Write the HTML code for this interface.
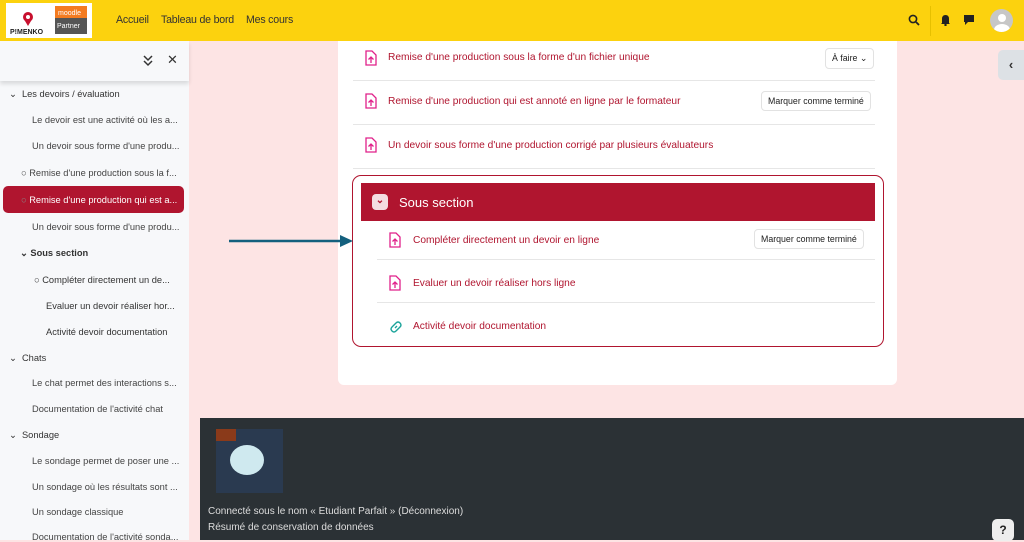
<!DOCTYPE html>
<html><head><meta charset="utf-8"><style>
*{box-sizing:border-box;margin:0;padding:0}
body{width:1024px;height:540px;overflow:hidden;font-family:"Liberation Sans",sans-serif;background:#fde4e4;position:relative;font-size:11px;color:#333}
.hdr{position:absolute;left:0;top:0;width:1024px;height:41px;background:#fcd20e}
.logo{position:absolute;left:6px;top:3px;width:86px;height:35px;background:#fff}
.nav{position:absolute;top:14px;font-size:10.6px;color:#333;letter-spacing:-0.2px;white-space:nowrap}
.side{position:absolute;left:0;top:41px;width:189px;height:499px;background:#f7f8fa}
.sidetop{height:40px;background:#f7f8fa;box-shadow:0 3px 4px rgba(0,0,0,.12);position:relative}
.si{position:absolute;font-size:9.3px;color:#333;white-space:nowrap}
.card{position:absolute;left:338px;top:41px;width:559px;height:344px;background:#fff;border-radius:0 0 6px 6px}
.row{position:absolute;left:353px;width:522px;height:44px;border-bottom:1px solid #e6e6e6}
.act{position:absolute;color:#b0152f;font-size:10.2px;white-space:nowrap}
.btn{position:absolute;border:1px solid #e2e2e2;border-radius:4px;font-size:8.8px;color:#222;padding:4px 6px;background:#fff;white-space:nowrap}
.foot{position:absolute;left:200px;top:418px;width:824px;height:122px;background:#2b3135}
</style></head><body>
<div class="hdr">
 <div class="logo">
  <svg width="86" height="35"><circle cx="22" cy="14" r="5" fill="#c8102e"/><circle cx="22" cy="14" r="2" fill="#fff"/><path d="M19 18 L22 23 L25 18" fill="#c8102e"/>
  <text x="4" y="31" font-size="7" font-weight="bold" font-family="Liberation Sans" fill="#222">P!MENKO</text>
  <rect x="49" y="3" width="32" height="28" fill="#555"/><rect x="49" y="3" width="32" height="12" fill="#f47b20"/>
  <text x="52" y="12" font-size="7" fill="#fff" font-family="Liberation Sans">moodle</text>
  <text x="51" y="25" font-size="7" fill="#fff" font-family="Liberation Sans">Partner</text></svg>
 </div>
 <div class="nav" style="left:116px">Accueil</div>
 <div class="nav" style="left:161px">Tableau de bord</div>
 <div class="nav" style="left:246px">Mes cours</div>
 <svg style="position:absolute;left:908px;top:14px" width="12" height="12"><circle cx="5" cy="5" r="3.6" stroke="#222" stroke-width="1.6" fill="none"/><path d="M8 8 L11 11" stroke="#222" stroke-width="1.8"/></svg>
 <div style="position:absolute;left:930px;top:6px;width:1px;height:30px;background:#e6c000"></div>
 <svg style="position:absolute;left:940px;top:14px" width="11" height="12"><path d="M2 9 L2 5 Q2 1 5.5 1 Q9 1 9 5 L9 9 L10 10 L1 10 Z" fill="#222"/><circle cx="5.5" cy="11" r="1.2" fill="#222"/></svg>
 <svg style="position:absolute;left:963px;top:14px" width="12" height="12"><path d="M1 1 H11 V8 H5 L2 11 V8 H1 Z" fill="#222"/></svg>
 <div style="position:absolute;left:990px;top:9px;width:23px;height:23px;border-radius:50%;background:#c7c7c7;overflow:hidden"><div style="position:absolute;left:8px;top:5px;width:8px;height:8px;border-radius:50%;background:#fff"></div><div style="position:absolute;left:4px;top:15px;width:16px;height:12px;border-radius:50%;background:#fff"></div></div>
</div>
<div class="side">
 <div class="sidetop"><svg style="position:absolute;left:143px;top:14px" width="10" height="12"><path d="M1 1 L5 5 L9 1 M1 6 L5 10 L9 6" stroke="#333" stroke-width="1.5" fill="none"/></svg><span style="position:absolute;left:167px;top:11px;font-size:13px">✕</span></div>
 <div style="position:absolute;left:3px;top:145px;width:181px;height:27px;background:#b0152f;border-radius:5px"></div>
 <div class="si" style="left:9px;top:48px">⌄ &nbsp;Les devoirs / évaluation</div>
 <div class="si" style="left:32px;top:74px;color:#444">Le devoir est une activité où les a...</div>
 <div class="si" style="left:32px;top:100px;color:#444">Un devoir sous forme d'une produ...</div>
 <div class="si" style="left:21px;top:127px;color:#444">○ Remise d'une production sous la f...</div>
 <div class="si" style="left:21px;top:154px;color:#fff"><span style="color:#888">○</span> Remise d'une production qui est a...</div>
 <div class="si" style="left:32px;top:181px;color:#444">Un devoir sous forme d'une produ...</div>
 <div class="si" style="left:20px;top:207px;font-weight:bold">⌄ Sous section</div>
 <div class="si" style="left:34px;top:234px">○ Compléter directement un de...</div>
 <div class="si" style="left:46px;top:260px">Evaluer un devoir réaliser hor...</div>
 <div class="si" style="left:46px;top:286px">Activité devoir documentation</div>
 <div class="si" style="left:9px;top:312px">⌄ &nbsp;Chats</div>
 <div class="si" style="left:32px;top:337px;color:#444">Le chat permet des interactions s...</div>
 <div class="si" style="left:32px;top:363px;color:#444">Documentation de l'activité chat</div>
 <div class="si" style="left:9px;top:389px">⌄ &nbsp;Sondage</div>
 <div class="si" style="left:32px;top:415px;color:#444">Le sondage permet de poser une ...</div>
 <div class="si" style="left:32px;top:441px;color:#444">Un sondage où les résultats sont ...</div>
 <div class="si" style="left:32px;top:466px;color:#444">Un sondage classique</div>
 <div class="si" style="left:32px;top:491px;color:#444">Documentation de l'activité sonda...</div>
</div>
<div style="position:absolute;left:998px;top:50px;width:26px;height:30px;background:#dde1e5;border-radius:5px 0 0 5px;font-size:13px;text-align:center;line-height:30px;font-weight:bold">‹</div>
<div class="card"></div>
<div class="row" style="top:37px"></div>
<div class="row" style="top:81px"></div>
<div class="row" style="top:125px"></div>
<svg width="0" height="0" style="position:absolute"><defs><g id="up"><path d="M1 1 H7 L11 5 V15 H1 Z" stroke="#e0208a" stroke-width="1.3" fill="none"/><path d="M6 13 V7 M3.5 9.5 L6 7 L8.5 9.5" stroke="#e0208a" stroke-width="1.3" fill="none"/></g></defs></svg>
<svg style="position:absolute;left:365px;top:50px" width="13" height="17"><use href="#up"/></svg>
<div class="act" style="left:388px;top:52px">Remise d'une production sous la forme d'un fichier unique</div>
<div class="btn" style="left:825px;top:48px">À faire ⌄</div>
<svg style="position:absolute;left:365px;top:93px" width="13" height="17"><use href="#up"/></svg>
<div class="act" style="left:388px;top:96px">Remise d'une production qui est annoté en ligne par le formateur</div>
<div class="btn" style="left:761px;top:91px">Marquer comme terminé</div>
<svg style="position:absolute;left:365px;top:137px" width="13" height="17"><use href="#up"/></svg>
<div class="act" style="left:388px;top:140px">Un devoir sous forme d'une production corrigé par plusieurs évaluateurs</div>
<div style="position:absolute;left:352px;top:175px;width:532px;height:172px;border:1.5px solid #b0152f;border-radius:9px"></div>
<div style="position:absolute;left:361px;top:183px;width:514px;height:38px;background:#b0152f"></div>
<div style="position:absolute;left:372px;top:194px;width:16px;height:16px;border-radius:4px;background:#f4dde1;text-align:center;font-size:10px;line-height:14px;color:#b0152f;font-weight:bold">⌄</div>
<div style="position:absolute;left:399px;top:195px;color:#fff;font-size:13px">Sous section</div>
<div class="row" style="left:377px;top:216px;width:498px"></div>
<div class="row" style="left:377px;top:259px;width:498px"></div>
<svg style="position:absolute;left:389px;top:232px" width="13" height="17"><use href="#up"/></svg>
<div class="act" style="left:413px;top:235px">Compléter directement un devoir en ligne</div>
<div class="btn" style="left:754px;top:229px">Marquer comme terminé</div>
<svg style="position:absolute;left:389px;top:275px" width="13" height="17"><use href="#up"/></svg>
<div class="act" style="left:413px;top:278px">Evaluer un devoir réaliser hors ligne</div>
<svg style="position:absolute;left:388px;top:319px" width="16" height="16"><path d="M7 9 L9 7 M6 6 L8 4 Q10 2 12 4 Q14 6 12 8 L10 10 M6 6 L4 8 Q2 10 4 12 Q6 14 8 12 L10 10" stroke="#1aa39a" stroke-width="1.4" fill="none"/></svg>
<div class="act" style="left:413px;top:321px">Activité devoir documentation</div>
<svg style="position:absolute;left:229px;top:234px" width="126" height="14"><path d="M0 7 H114" stroke="#14607e" stroke-width="2.5"/><path d="M111 1 L124 7 L111 13 Z" fill="#14607e"/></svg>
<div class="foot">
 <div style="position:absolute;left:16px;top:11px;width:67px;height:64px;background:#2a3a50;overflow:hidden"><div style="position:absolute;left:14px;top:16px;width:34px;height:30px;border-radius:50%;background:#cfe9ef"></div><div style="position:absolute;left:0;top:0;width:20px;height:12px;background:#8a3a1a"></div></div>
 <div style="position:absolute;left:8px;top:88px;color:#ddd;font-size:10px">Connecté sous le nom « Etudiant Parfait » (Déconnexion)</div>
 <div style="position:absolute;left:8px;top:104px;color:#ddd;font-size:10px">Résumé de conservation de données</div>
 <div style="position:absolute;left:792px;top:101px;width:22px;height:22px;border-radius:5px;background:#eee;text-align:center;font-weight:bold;line-height:22px;color:#222;font-size:12px">?</div>
</div>
</body></html>
